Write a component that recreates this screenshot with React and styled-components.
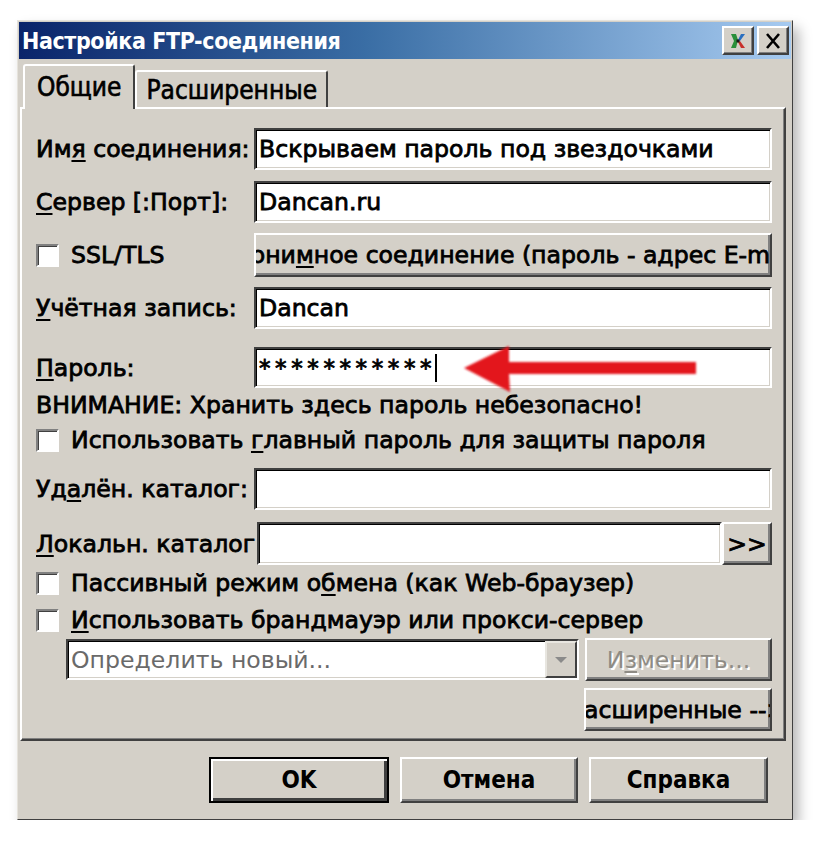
import React from 'react';
import styled, { createGlobalStyle } from 'styled-components';

const GlobalStyle = createGlobalStyle`
  html, body {
    margin: 0;
    padding: 0;
    background: #ffffff;
  }
  body {
    font-family: "DejaVu Sans", "Noto Sans", sans-serif;
  }
`;

const Dialog = styled.div`
  margin: 20px 0 0 17px;
  width: 776px;
  height: 800px;
  box-sizing: border-box;
  background: #d4d0c8;
  border: 1px solid;
  border-color: #e6e3dc #404040 #404040 #e6e3dc;
  padding: 1px;
  box-shadow: 6px 8px 12px rgba(0, 0, 0, 0.28);
  display: flex;
  flex-direction: column;
`;

const TitleBar = styled.div`
  height: 37px;
  flex: none;
  display: flex;
  align-items: center;
  padding: 0 2px 0 3px;
  background: linear-gradient(90deg, #0a246a 0%, #3a6ea5 45%, #a6caf0 100%);
`;

const TitleText = styled.div`
  flex: 1;
  color: #ffffff;
  font-family: "DejaVu Sans Condensed", "DejaVu Sans", sans-serif;
  font-weight: bold;
  font-size: 23px;
  letter-spacing: -0.4px;
`;

const CaptionButton = styled.div`
  width: 32px;
  height: 29px;
  margin-left: 3px;
  box-sizing: border-box;
  background: #d4d0c8;
  border: 2px solid;
  border-color: #ffffff #404040 #404040 #ffffff;
  box-shadow: inset -1px -1px 0 #808080;
  display: flex;
  align-items: center;
  justify-content: center;
`;

const Body = styled.div`
  flex: 1;
  display: flex;
  flex-direction: column;
  padding: 4px 1px 0 1px;
`;

const Tabs = styled.div`
  display: flex;
  align-items: flex-end;
  padding-left: 3px;
  height: 44px;
  position: relative;
  z-index: 1;
`;

const Tab = styled.div`
  height: ${(p) => (p.$active ? 45 : 37)}px;
  margin-bottom: ${(p) => (p.$active ? -2 : 0)}px;
  box-sizing: border-box;
  padding: 0 ${(p) => (p.$active ? 12 : 9)}px;
  background: #d4d0c8;
  border: 2px solid;
  border-bottom: none;
  border-color: #ffffff #404040 transparent #ffffff;
  border-radius: 3px 3px 0 0;
  display: flex;
  align-items: ${(p) => (p.$active ? 'flex-start' : 'center')};
  padding-top: ${(p) => (p.$active ? 6 : 0)}px;
  font-family: "DejaVu Sans Condensed", "DejaVu Sans", sans-serif;
  font-size: 26px;
  color: #000;
  -webkit-text-stroke: 0.6px #000;
`;

const Panel = styled.div`
  position: relative;
  width: 766px;
  height: 634px;
  box-sizing: border-box;
  border: 2px solid;
  border-color: #ffffff #404040 #404040 #ffffff;
  box-shadow: inset -1px -1px 0 #808080;
  padding: 19px 12px 0 14px;
  display: flex;
  flex-direction: column;
  font-size: 23.6px;
  color: #000;
`;

const FieldRow = styled.div`
  display: grid;
  grid-template-columns: 218px 1fr;
  align-items: center;
  height: ${(p) => p.$h || 42}px;
  margin-top: ${(p) => p.$mt || 0}px;
`;

const Label = styled.div`
  white-space: nowrap;
  -webkit-text-stroke: 0.8px #000;
`;

const Key = styled.span`
  text-decoration: underline;
  text-underline-offset: 3px;
  text-decoration-thickness: 2px;
`;

const Input = styled.div`
  position: relative;
  height: ${(p) => p.$h || 42}px;
  box-sizing: border-box;
  background: #ffffff;
  border: 2px solid;
  border-color: #404040 #ffffff #ffffff #404040;
  box-shadow: inset 1px 1px 0 #000, inset -1px -1px 0 #d4d0c8;
  padding: 0 6px 0 3px;
  display: flex;
  align-items: center;
  white-space: nowrap;
  color: ${(p) => (p.$muted ? '#6a6a6a' : '#000')};
  -webkit-text-stroke: ${(p) => (p.$muted ? 0 : 0.8)}px #000;
  flex: ${(p) => (p.$grow ? 1 : 'none')};
  width: ${(p) => (p.$w ? `${p.$w}px` : 'auto')};
`;

const Stars = styled.span`
  letter-spacing: 4.6px;
  font-size: 23px;
`;

const Caret = styled.span`
  display: inline-block;
  width: 2px;
  height: 28px;
  background: #000;
  margin-left: -1px;
`;

const Arrow = styled.svg`
  position: absolute;
  left: 199px;
  top: -8px;
`;

const Button = styled.div`
  height: ${(p) => p.$h || 44}px;
  width: ${(p) => (p.$w ? `${p.$w}px` : 'auto')};
  flex: ${(p) => (p.$grow ? 1 : 'none')};
  box-sizing: border-box;
  background: #d4d0c8;
  border: 2px solid;
  border-color: #ffffff #404040 #404040 #ffffff;
  box-shadow: inset -2px -2px 0 #808080;
  display: flex;
  align-items: center;
  justify-content: center;
  overflow: hidden;
  white-space: nowrap;
  color: ${(p) => (p.$disabled ? '#8e8b84' : '#000')};
  text-shadow: ${(p) => (p.$disabled ? '2px 2px 0 #ffffff' : 'none')};
  -webkit-text-stroke: ${(p) => (p.$disabled ? '0px #8e8b84' : '0.8px #000')};
`;

const Check = styled.div`
  width: 23px;
  height: 23px;
  flex: none;
  box-sizing: border-box;
  background: #ffffff;
  border: 2px solid;
  border-color: #808080 #ffffff #ffffff #808080;
  box-shadow: inset 1px 1px 0 #404040;
  margin-right: 12px;
`;

const CheckRow = styled.div`
  display: flex;
  align-items: center;
  height: ${(p) => p.$h || 24}px;
  margin-top: ${(p) => p.$mt || 0}px;
  white-space: nowrap;
  -webkit-text-stroke: 0.8px #000;
`;

const Warning = styled.div`
  height: 22px;
  line-height: 22px;
  margin-top: 6px;
  white-space: nowrap;
  -webkit-text-stroke: 0.8px #000;
`;

const Group = styled.div`
  display: flex;
  align-items: center;
`;

const ProxyRow = styled.div`
  display: flex;
  align-items: center;
  gap: 6px;
  height: 43px;
  margin-top: 6px;
  padding-left: 30px;
`;

const Combo = styled(Input)`
  padding-right: 0;
  justify-content: space-between;
`;

const DropButton = styled.div`
  width: 32px;
  height: 100%;
  box-sizing: border-box;
  background: #d4d0c8;
  border: 2px solid;
  border-color: #e8e6e0 #404040 #404040 #e8e6e0;
  display: flex;
  align-items: center;
  justify-content: center;
`;

const RightRow = styled.div`
  display: flex;
  justify-content: flex-end;
  margin-top: 7px;
`;

const Footer = styled.div`
  display: flex;
  justify-content: flex-end;
  gap: 11px;
  padding: 16px 22px 0 0;
`;

const FooterButton = styled(Button)`
  font-family: "DejaVu Sans Condensed", "DejaVu Sans", sans-serif;
  font-weight: bold;
  font-size: 24px;
  -webkit-text-stroke: 0;
  border-color: ${(p) => (p.$default ? '#000' : '#ffffff #404040 #404040 #ffffff')};
  box-shadow: ${(p) =>
    p.$default
      ? 'inset 2px 2px 0 #ffffff, inset -3px -3px 0 #404040'
      : 'inset -2px -2px 0 #808080'};
`;

function HelpIcon() {
  return (
    <svg width="18" height="18" viewBox="0 0 18 18">
      <path d="M2 2 L7 2 L9 8 L7 16 L2 16 L5 9 Z" fill="#2a8f3a" />
      <path d="M9 8 L12 2 L16 2 L11 9 Z" fill="#2a6fc0" />
      <path d="M11 9 L16 16 L12 16 L9 10 Z" fill="#c8302a" />
      <rect x="7.5" y="7.5" width="3" height="3" fill="#1a1a1a" />
    </svg>
  );
}

function CloseIcon() {
  return (
    <svg width="18" height="18" viewBox="0 0 18 18">
      <path d="M3 2 L15 16 M15 2 L3 16" stroke="#000" strokeWidth="2.6" />
    </svg>
  );
}

export default function App() {
  return (
    <>
      <GlobalStyle />
      <Dialog>
        <TitleBar>
          <TitleText>Настройка FTP-соединения</TitleText>
          <CaptionButton>
            <HelpIcon />
          </CaptionButton>
          <CaptionButton>
            <CloseIcon />
          </CaptionButton>
        </TitleBar>
        <Body>
          <Tabs>
            <Tab $active>Общие</Tab>
            <Tab>Расширенные</Tab>
          </Tabs>
          <Panel>
            <FieldRow>
              <Label>
                Им<Key>я</Key> соединения:
              </Label>
              <Input>Вскрываем пароль под звездочками</Input>
            </FieldRow>
            <FieldRow $mt={11}>
              <Label>
                <Key>С</Key>ервер [:Порт]:
              </Label>
              <Input>Dancan.ru</Input>
            </FieldRow>
            <FieldRow $mt={10} $h={44}>
              <CheckRow>
                <Check />
                <span>SSL/TLS</span>
              </CheckRow>
              <Button>
                <span>
                  Анони<Key>м</Key>ное соединение (пароль - адрес E-mail)
                </span>
              </Button>
            </FieldRow>
            <FieldRow $mt={10}>
              <Label>
                <Key>У</Key>чётная запись:
              </Label>
              <Input>Dancan</Input>
            </FieldRow>
            <FieldRow $mt={18} $h={41}>
              <Label>
                <Key>П</Key>ароль:
              </Label>
              <Input $h={41}>
                <Stars>***********</Stars>
                <Caret />
                <Arrow width="250" height="56" viewBox="0 0 250 56">
                  <defs>
                    <filter id="soft" x="-5%" y="-20%" width="110%" height="140%">
                      <feGaussianBlur stdDeviation="0.8" />
                    </filter>
                  </defs>
                  <polygon
                    points="9,27 54,5 54,21 241,21 241,33 54,33 55,51"
                    fill="#e3141c"
                    filter="url(#soft)"
                  />
                </Arrow>
              </Input>
            </FieldRow>
            <Warning>ВНИМАНИЕ: Хранить здесь пароль небезопасно!</Warning>
            <CheckRow $mt={12}>
              <Check />
              <span>
                Использовать <Key>г</Key>лавный пароль для защиты пароля
              </span>
            </CheckRow>
            <FieldRow $mt={16}>
              <Label>
                Уд<Key>а</Key>лён. каталог:
              </Label>
              <Input />
            </FieldRow>
            <FieldRow $mt={12} $h={43}>
              <Label>
                <Key>Л</Key>окальн. каталог
              </Label>
              <Group>
                <Input $grow $h={43} style={{ marginLeft: 3 }} />
                <Button $w={50} $h={43}>
                  &gt;&gt;
                </Button>
              </Group>
            </FieldRow>
            <CheckRow $mt={6}>
              <Check />
              <span>
                Пассивный режим о<Key>б</Key>мена (как Web-браузер)
              </span>
            </CheckRow>
            <CheckRow $mt={13}>
              <Check />
              <span>
                <Key>И</Key>спользовать брандмауэр или прокси-сервер
              </span>
            </CheckRow>
            <ProxyRow>
              <Combo $w={513} $h={41} $muted>
                Определить новый...
                <DropButton>
                  <svg width="14" height="8" viewBox="0 0 14 8">
                    <path d="M1 1 L13 1 L7 7 Z" fill="#8a8a8a" />
                  </svg>
                </DropButton>
              </Combo>
              <Button $grow $h={43} $disabled>
                <span>
                  И<Key>з</Key>менить...
                </span>
              </Button>
            </ProxyRow>
            <RightRow>
              <Button $w={188} $h={43}>
                Расширенные --&gt;
              </Button>
            </RightRow>
          </Panel>
          <Footer>
            <FooterButton $default $w={180} $h={46}>
              OK
            </FooterButton>
            <FooterButton $w={178} $h={46}>
              Отмена
            </FooterButton>
            <FooterButton $w={179} $h={46}>
              Справка
            </FooterButton>
          </Footer>
        </Body>
      </Dialog>
    </>
  );
}
